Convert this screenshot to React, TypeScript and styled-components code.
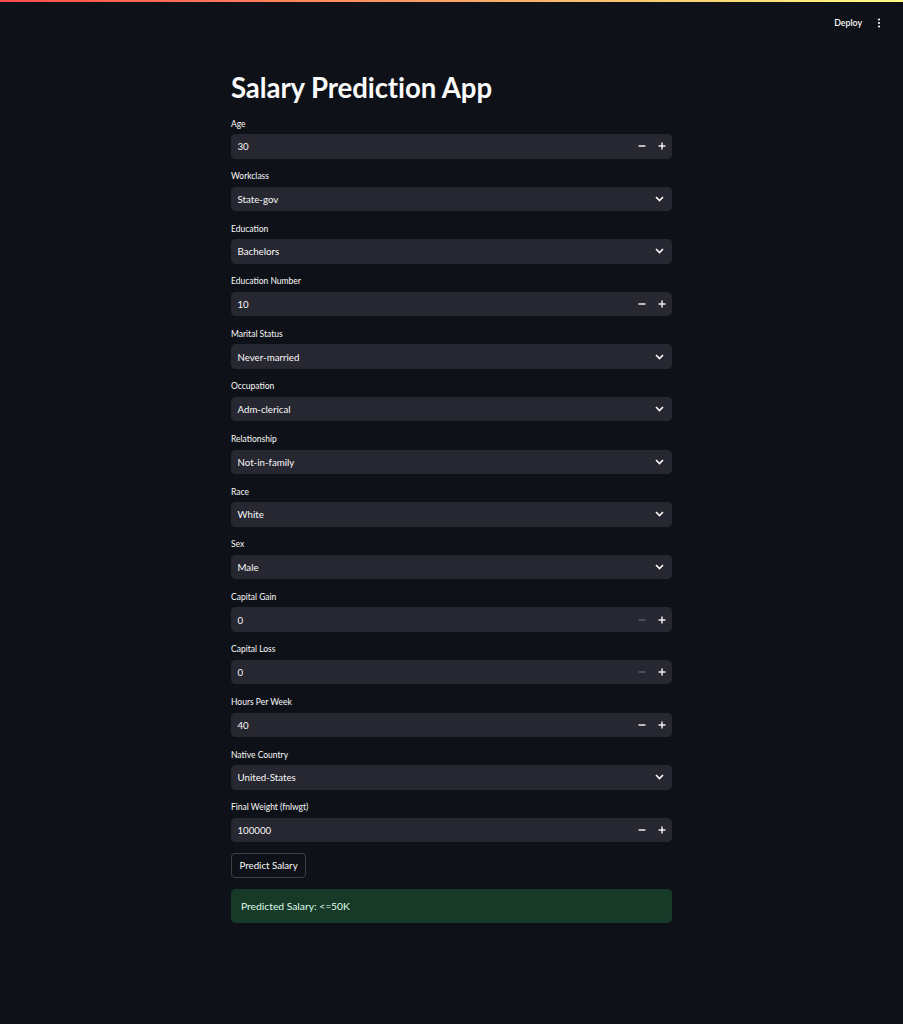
import React from "react";
import styled, { createGlobalStyle } from "styled-components";

const GlobalStyle = createGlobalStyle`
  html, body {
    margin: 0;
    padding: 0;
    background: #0e1117;
  }
  body {
    font-family: Lato, "Noto Sans", "Liberation Sans", sans-serif;
    color: #fafafa;
    min-height: 1024px;
  }
  * { box-sizing: border-box; }
`;

const Decoration = styled.div`
  position: fixed;
  top: 0;
  left: 0;
  right: 0;
  height: 2px;
  background: linear-gradient(90deg, rgb(255, 75, 75), rgb(255, 253, 128));
  z-index: 10;
`;

const Header = styled.header`
  position: fixed;
  top: 0;
  left: 0;
  right: 0;
  height: 45px;
  display: flex;
  align-items: center;
  justify-content: flex-end;
  padding-right: 19px;
  gap: 9px;
  background: #0e1117;
  z-index: 5;
`;

const DeployButton = styled.button`
  background: transparent;
  border: none;
  color: #fafafa;
  font-family: inherit;
  font-size: 8.8px;
  font-weight: 600;
  padding: 4px 3px 4px 6px;
  cursor: pointer;
`;

const MenuButton = styled.button`
  background: transparent;
  border: none;
  padding: 2px 3px;
  display: flex;
  align-items: center;
  cursor: pointer;
`;

const Main = styled.main`
  width: 441px;
  margin: 0 auto;
  padding-top: 70px;
  padding-bottom: 60px;
  display: flex;
  flex-direction: column;
`;

const Title = styled.h1`
  margin: 0 0 11.5px 0;
  font-size: 27.6px;
  line-height: 36px;
  font-weight: 700;
  color: #fafafa;
  letter-spacing: -0.1px;
`;

const Fields = styled.div`
  display: flex;
  flex-direction: column;
  gap: 11.6px;
`;

const Field = styled.div`
  display: flex;
  flex-direction: column;
`;

const Label = styled.label`
  font-size: 8.5px;
  line-height: 13px;
  height: 13px;
  margin-bottom: 3.5px;
  color: #fafafa;
`;

const Box = styled.div`
  height: 24.5px;
  background: #262730;
  border-radius: 4.5px;
  display: flex;
  align-items: center;
  padding-left: 6.5px;
  font-size: 9.7px;
  color: #fafafa;
`;

const Value = styled.span`
  flex: 1;
`;

const StepButton = styled.button<{ $disabled?: boolean }>`
  width: 20px;
  height: 100%;
  background: transparent;
  border: none;
  padding: 0;
  display: flex;
  align-items: center;
  justify-content: center;
  color: ${(p) => (p.$disabled ? "#5e6068" : "#fafafa")};
`;

const ChevronWrap = styled.div`
  width: 26px;
  display: flex;
  align-items: center;
  justify-content: center;
  color: #fafafa;
`;

const PredictButton = styled.button`
  align-self: flex-start;
  margin-top: 10.3px;
  height: 25px;
  padding: 0 7.5px;
  background: #0e1117;
  border: 1px solid rgba(250, 250, 250, 0.2);
  border-radius: 4.5px;
  color: #fafafa;
  font-family: inherit;
  font-size: 9.7px;
  cursor: pointer;
`;

const Success = styled.div`
  margin-top: 11px;
  height: 34px;
  background: #173928;
  border-radius: 4.5px;
  display: flex;
  align-items: center;
  padding-left: 10px;
  font-size: 10.3px;
  color: #dffde9;
`;

const Minus = () => (
  <svg width="8" height="8" viewBox="0 0 8 8">
    <rect x="0.5" y="3.3" width="7" height="1.4" fill="currentColor" />
  </svg>
);

const Plus = () => (
  <svg width="8" height="8" viewBox="0 0 8 8">
    <rect x="0.5" y="3.3" width="7" height="1.4" fill="currentColor" />
    <rect x="3.3" y="0.5" width="1.4" height="7" fill="currentColor" />
  </svg>
);

const Chevron = () => (
  <svg width="9" height="6" viewBox="0 0 9 6">
    <path d="M1 1 L4.5 4.5 L8 1" fill="none" stroke="currentColor" strokeWidth="1.6" />
  </svg>
);

const Kebab = () => (
  <svg width="4" height="10" viewBox="0 0 4 10">
    <circle cx="2" cy="1.5" r="1.1" fill="#fafafa" />
    <circle cx="2" cy="5" r="1.1" fill="#fafafa" />
    <circle cx="2" cy="8.5" r="1.1" fill="#fafafa" />
  </svg>
);

type FieldDef =
  | { kind: "number"; label: string; value: string; minDisabled?: boolean }
  | { kind: "select"; label: string; value: string };

const fields: FieldDef[] = [
  { kind: "number", label: "Age", value: "30" },
  { kind: "select", label: "Workclass", value: "State-gov" },
  { kind: "select", label: "Education", value: "Bachelors" },
  { kind: "number", label: "Education Number", value: "10" },
  { kind: "select", label: "Marital Status", value: "Never-married" },
  { kind: "select", label: "Occupation", value: "Adm-clerical" },
  { kind: "select", label: "Relationship", value: "Not-in-family" },
  { kind: "select", label: "Race", value: "White" },
  { kind: "select", label: "Sex", value: "Male" },
  { kind: "number", label: "Capital Gain", value: "0", minDisabled: true },
  { kind: "number", label: "Capital Loss", value: "0", minDisabled: true },
  { kind: "number", label: "Hours Per Week", value: "40" },
  { kind: "select", label: "Native Country", value: "United-States" },
  { kind: "number", label: "Final Weight (fnlwgt)", value: "100000" },
];

export default function App() {
  return (
    <>
      <GlobalStyle />
      <Decoration />
      <Header>
        <DeployButton>Deploy</DeployButton>
        <MenuButton aria-label="menu">
          <Kebab />
        </MenuButton>
      </Header>
      <Main>
        <Title>Salary Prediction App</Title>
        <Fields>
          {fields.map((f) => (
            <Field key={f.label}>
              <Label>{f.label}</Label>
              <Box>
                <Value>{f.value}</Value>
                {f.kind === "number" ? (
                  <>
                    <StepButton $disabled={f.minDisabled}>
                      <Minus />
                    </StepButton>
                    <StepButton>
                      <Plus />
                    </StepButton>
                  </>
                ) : (
                  <ChevronWrap>
                    <Chevron />
                  </ChevronWrap>
                )}
              </Box>
            </Field>
          ))}
        </Fields>
        <PredictButton>Predict Salary</PredictButton>
        <Success>Predicted Salary: &lt;=50K</Success>
      </Main>
    </>
  );
}
